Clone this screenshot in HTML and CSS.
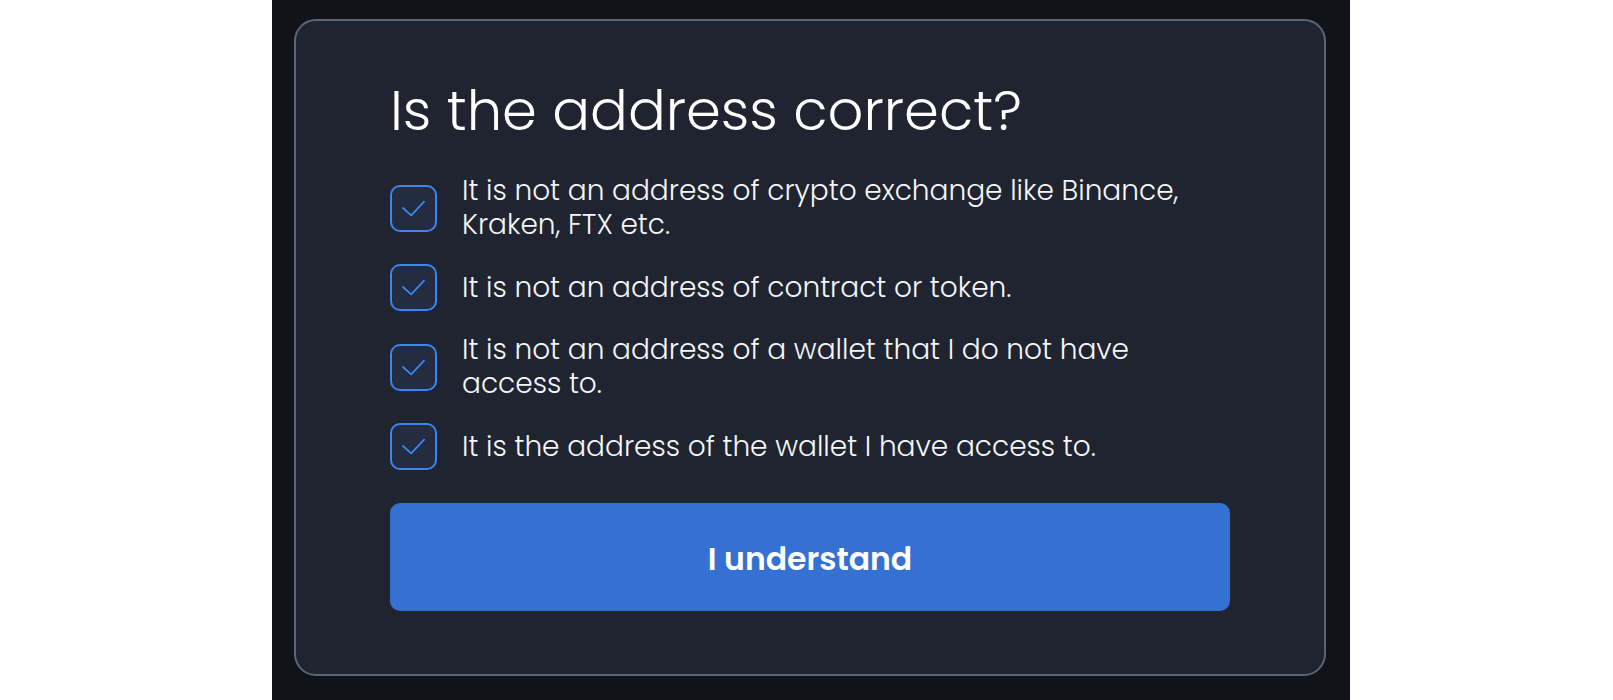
FILE: index.html
```html
<!DOCTYPE html>
<html lang="en">
<head>
<meta charset="utf-8">
<title>Is the address correct?</title>
<link rel="stylesheet" href="styles.css">
</head>
<body>
<div class="page">
  <main class="panel">
    <section class="card">
      <h1 class="title">Is the address correct?</h1>
      <ul class="checks">
        <li class="check">
          <span class="box"><svg viewBox="0 0 47 47" width="47" height="47"><path d="M12 23 L21 31 L35 16" /></svg></span>
          <span class="label">It is not an address of crypto exchange like Binance,<br>Kraken, FTX etc.</span>
        </li>
        <li class="check">
          <span class="box"><svg viewBox="0 0 47 47" width="47" height="47"><path d="M12 23 L21 31 L35 16" /></svg></span>
          <span class="label">It is not an address of contract or token.</span>
        </li>
        <li class="check">
          <span class="box"><svg viewBox="0 0 47 47" width="47" height="47"><path d="M12 23 L21 31 L35 16" /></svg></span>
          <span class="label">It is not an address of a wallet that I do not have<br>access to.</span>
        </li>
        <li class="check">
          <span class="box"><svg viewBox="0 0 47 47" width="47" height="47"><path d="M12 23 L21 31 L35 16" /></svg></span>
          <span class="label">It is the address of the wallet I have access to.</span>
        </li>
      </ul>
      <button class="confirm" type="button">I understand</button>
    </section>
  </main>
</div>
</body>
</html>
```
FILE: styles.css
```css
* { box-sizing: border-box; }
html, body {
  margin: 0;
  padding: 0;
  background: #ffffff;
}
body {
  font-family: "Poppins", Inter, "Noto Sans", sans-serif;
  color: #f5f6f8;
}
.page {
  display: flex;
  height: 700px;
  overflow: hidden;
}
.panel {
  margin-left: 272px;
  width: 1078px;
  height: 700px;
  background: #111318;
  padding: 19px 22px 0 22px;
}
.card {
  width: 1032px;
  background: #1f2430;
  border: 2px solid #5b6577;
  border-radius: 22px;
  padding: 56px 94px 63px 94px;
  display: flex;
  flex-direction: column;
}
.title {
  margin: 0;
  font-size: 56px;
  line-height: 68px;
  font-weight: 300;
  color: #ffffff;
}
.checks {
  list-style: none;
  margin: 29px 0 0 0;
  padding: 0;
  display: flex;
  flex-direction: column;
  gap: 22px;
}
.check {
  display: flex;
  align-items: center;
  gap: 25px;
}
.box {
  flex: 0 0 auto;
  width: 47px;
  height: 47px;
  border: 2px solid #3d84ee;
  border-radius: 10px;
  background: #232c41;
  display: flex;
  align-items: center;
  justify-content: center;
}
.box svg {
  display: block;
  width: 43px;
  height: 43px;
}
.box path {
  fill: none;
  stroke: #3d84ee;
  stroke-width: 2;
  stroke-linecap: round;
  stroke-linejoin: round;
}
.label {
  font-size: 28px;
  line-height: 34px;
  font-weight: 300;
  color: #f5f6f8;
}
.confirm {
  margin-top: 33px;
  height: 108px;
  width: 100%;
  border: none;
  border-radius: 10px;
  background: #3471d3;
  color: #ffffff;
  font-family: "Poppins", Inter, "Noto Sans", sans-serif;
  font-size: 31.5px;
  font-weight: 600;
  padding: 4px 0 0 0;
  cursor: pointer;
}
```
